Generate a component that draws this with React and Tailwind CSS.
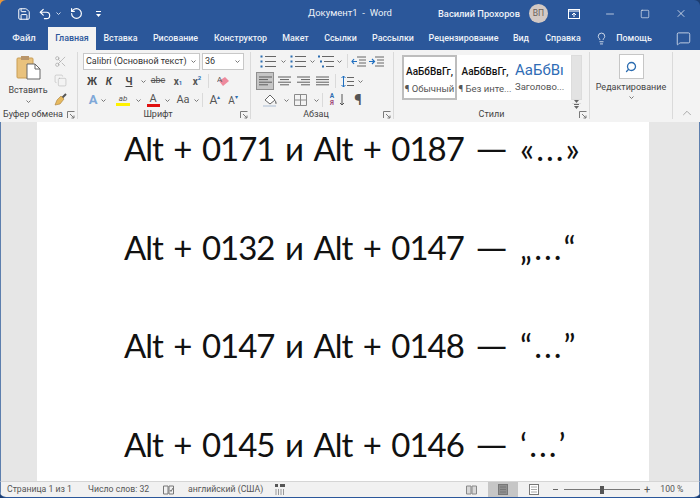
import React from "react";
import { Save, Undo2, RotateCw, Minus, Square, X, Lightbulb, MessageSquare, ChevronUp, Search, Scissors, Copy } from "lucide-react";

const Caret = ({ className = "" }) => (
  <svg width="5" height="3" viewBox="0 0 5 3" className={className}><path d="M0.5 0.5 L2.5 2.5 L4.5 0.5" fill="none" stroke="#777" strokeWidth="1" /></svg>
);
const Launcher = () => (
  <svg width="8" height="8" viewBox="0 0 8 8"><path d="M0.5 7V0.5H7.5M3 3L7 7M7 4.5V7H4.5" fill="none" stroke="#7a7a7a" strokeWidth="1" /></svg>
);
const Cell = ({ className = "", children }) => <div className={`flex h-full shrink-0 items-center justify-center ${className}`}>{children}</div>;
const VSep = ({ className = "" }) => <div className={`w-px shrink-0 bg-[#dadada] ${className}`} />;

const Lines = ({ kind = "left" }) => {
  const rows = {
    left: [[1, 14], [1, 10], [1, 14], [1, 10]],
    center: [[1, 14], [3, 12], [1, 14], [3, 12]],
    right: [[1, 14], [5, 14], [1, 14], [5, 14]],
    just: [[1, 14], [1, 14], [1, 14], [1, 14]],
  }[kind];
  return (
    <svg width="15" height="12" viewBox="0 0 15 12">
      {rows.map((r, i) => <path key={i} d={`M${r[0]} ${2 + i * 2.6}H${r[1]}`} stroke="#5f5f5f" strokeWidth="1" />)}
    </svg>
  );
};
const ListIcon = ({ c1 = "#2b6cb0", multi }) => (
  <svg width="17" height="13" viewBox="0 0 17 13">
    {[1.5, 6.5, 11.5].map((y, i) => (
      <g key={y}>
        <rect x={multi ? i * 2 : 0.5} y={y - 1} width="2" height="2" fill={c1} />
        <path d={`M${multi ? 4 + i * 2 : 5} ${y}H16`} stroke="#666" strokeWidth="1" />
      </g>
    ))}
  </svg>
);
const IndentIcon = ({ dir }) => (
  <svg width="15" height="11" viewBox="0 0 15 11">
    <path d="M6 1H15M8 4H15M8 7H15M6 10H15" stroke="#666" strokeWidth="1" />
    <path d={dir === "l" ? "M1 5.5H6M3 3L1 5.5L3 8" : "M0 5.5H5M3 3L5.5 5.5L3 8"} stroke="#1f6fc0" strokeWidth="1.2" fill="none" />
  </svg>
);
const PaperIcon = ({ active }) => (
  <svg width="12" height="11" viewBox="0 0 12 11"><rect x="1.5" y="0.5" width="9" height="10" fill={active ? "#8f8f8f" : "#fff"} stroke="#777" /><path d="M3 3H9M3 5.5H9M3 8H9" stroke={active ? "#777" : "#aaa"} /></svg>
);

const tabs = [
  ["Вставка", "w-[49px]"],
  ["Рисование", "w-[61px]"],
  ["Конструктор", "w-[69px]"],
  ["Макет", "w-[41px]"],
  ["Ссылки", "w-[49px]"],
  ["Рассылки", "w-[56px]"],
  ["Рецензирование", "w-[85px]"],
  ["Вид", "w-[30px]"],
  ["Справка", "w-[54px]"],
];

const docLines = [
  ["Alt + 0171 и Alt + 0187", "«", "»"],
  ["Alt + 0132 и Alt + 0147", "„", "“"],
  ["Alt + 0147 и Alt + 0148", "“", "”"],
  ["Alt + 0145 и Alt + 0146", "‘", "’"],
];

const Group = ({ className, padClass = "", label, labelClass = "", launcher, children }) => (
  <div className={`flex h-full shrink-0 flex-col ${className}`}>
    <div className={`min-h-0 flex-1 ${padClass}`}>{children}</div>
    <div className="relative flex h-[15px] items-center justify-center text-[9px] leading-none text-[#444]">
      <span className={`whitespace-nowrap ${labelClass}`}>{label}</span>
      {launcher && <div className="absolute right-[2px] top-[4px]"><Launcher /></div>}
    </div>
  </div>
);

export default function App() {
  return (
    <div className="relative h-[498px] w-[700px] overflow-hidden bg-[#1d3e70] font-['Roboto',sans-serif]">
      <div className="absolute left-0 top-0 h-[6px] w-[6px] bg-[#e8973a]" />
      <div className="relative flex h-full flex-col overflow-hidden rounded-[6px] border-b border-[#2b579a]">
        {/* title */}
        <div className="flex h-[27px] shrink-0 items-center bg-[#2b579a] text-white">
          <Cell className="ml-[15px] w-[18px]"><Save size={14} strokeWidth={1.7} /></Cell>
          <Cell className="ml-[4px] w-[16px]"><Undo2 size={14} strokeWidth={2} /></Cell>
          <Cell className="ml-[2px] w-[6px]"><svg width="5" height="3" viewBox="0 0 5 3"><path d="M0.5 0.5 L2.5 2.5 L4.5 0.5" fill="none" stroke="#cdd9ec" /></svg></Cell>
          <Cell className="ml-[8px] w-[14px]"><RotateCw size={13} strokeWidth={2.2} className="-scale-x-100" /></Cell>
          <Cell className="ml-[12px] w-[6px] flex-col gap-[2px]"><div className="h-px w-[5px] bg-white" /><svg width="5" height="3" viewBox="0 0 5 3"><path d="M0 0H5L2.5 3Z" fill="#fff" /></svg></Cell>
          <div className="ml-[207px] w-[85px] whitespace-pre text-[9.5px] text-[#eef2f8]">Документ1  -  Word</div>
          <div className="ml-[45px] w-[86px] whitespace-nowrap text-[9.3px] font-medium text-[#eef2f8]">Василий Прохоров</div>
          <div className="ml-[5px] flex h-[19px] w-[19px] shrink-0 items-center justify-center rounded-full bg-[#d3c9c4] text-[8.5px] text-[#6a5f5a]">ВП</div>
          <Cell className="ml-[20px] w-[12px]"><svg width="12" height="10" viewBox="0 0 12 10"><rect x="0.5" y="0.5" width="11" height="9" fill="none" stroke="#fff" /><path d="M0.5 2H11.5" stroke="#fff" /><path d="M6 8V4M4 6L6 4L8 6" stroke="#fff" fill="none" /></svg></Cell>
          <Cell className="ml-[24px] w-[12px]"><Minus size={12} strokeWidth={1.3} /></Cell>
          <Cell className="ml-[23px] w-[12px]"><Square size={10} strokeWidth={1.4} /></Cell>
          <Cell className="ml-[24px] w-[12px]"><X size={13} strokeWidth={1.4} /></Cell>
        </div>
        {/* tabs */}
        <div className="flex h-[23px] shrink-0 items-stretch bg-[#2b579a] text-[8.9px] font-medium text-[#eef2f8]">
          <Cell className="w-[48px] text-[9.5px]">Файл</Cell>
          <Cell className="w-[48px] bg-[#f3f3f3] text-[#2b579a]">Главная</Cell>
          {tabs.map(([t, w]) => <Cell key={t} className={w}>{t}</Cell>)}
          <Cell className="ml-[4px] w-[14px]"><Lightbulb size={13} strokeWidth={1.5} /></Cell>
          <Cell className="ml-[7px] w-[38px]">Помощь</Cell>
          <Cell className="ml-[22px] w-[16px]"><MessageSquare size={15} strokeWidth={1.2} /></Cell>
        </div>
        {/* ribbon */}
        <div className="flex h-[72px] shrink-0 bg-[#f3f3f3] pt-[2px] text-[#444]">
          <Group className="w-[77px]" padClass="pl-[3px] pr-[2px]" label="Буфер обмена" labelClass="-ml-[11px]" launcher>
            <div className="flex h-full">
              <div className="flex w-[50px] flex-col items-center pt-[3px]">
                <svg width="25" height="25" viewBox="0 0 25 25">
                  <rect x="1" y="3" width="16" height="20" rx="1" fill="#e9c27d" stroke="#c99d55" />
                  <rect x="5" y="1" width="8" height="4" fill="#b9956a" />
                  <path d="M11 9H19L24 14V24H11Z" fill="#fff" stroke="#666" />
                  <path d="M19 9V14H24" fill="none" stroke="#666" />
                </svg>
                <div className="mt-[3px] text-[9px] leading-[14px]">Вставить</div>
                <Caret className="mt-[3px]" />
              </div>
              <div className="flex w-[14px] flex-col items-center gap-[6px] pt-[3px]">
                <Scissors size={13} strokeWidth={1.2} className="text-[#a0a0a0]" />
                <Copy size={13} strokeWidth={1} className="text-[#b0b0b0]" />
                <svg width="13" height="13" viewBox="0 0 13 13"><path d="M8 5L12 1" stroke="#555" strokeWidth="2" /><path d="M7 3L10 6L6 11L1 12L3 7Z" fill="#e6b95f" stroke="#a9803a" strokeWidth="0.6" /></svg>
              </div>
            </div>
          </Group>
          <VSep className="mb-[3px]" />
          <Group className="w-[172px]" padClass="px-[5px]" label="Шрифт" labelClass="-ml-[12px]" launcher>
            <div className="flex h-[18px] gap-[2px] pt-px">
              <div className="flex w-[117px] items-center justify-between border border-[#c8c8c8] bg-white pl-[2px] pr-[3px] text-[9px] leading-none text-[#333]">
                <span className="whitespace-nowrap">Calibri (Основной текст)</span><Caret />
              </div>
              <div className="flex w-[42px] items-center justify-between border border-[#c8c8c8] bg-white pl-[2px] pr-[3px] text-[9px] leading-none text-[#333]">
                <span>36</span><Caret />
              </div>
            </div>
            <div className="mt-[2px] flex h-[18px] items-center text-[10px] text-[#555]">
              <Cell className="w-[18px] font-bold text-[#444]">Ж</Cell>
              <Cell className="w-[16px] font-bold italic text-[#444]">К</Cell>
              <Cell className="w-[24px] font-bold underline text-[#444]">Ч</Cell>
              <Cell className="w-[5px]"><Caret /></Cell>
              <Cell className="w-[24px] text-[9px] line-through">abc</Cell>
              <Cell className="w-[16px] font-bold">x<sub className="text-[6px] text-[#2b6cb0]">1</sub></Cell>
              <Cell className="w-[22px] font-bold">x<sup className="text-[6px] text-[#2b6cb0]">2</sup></Cell>
              <VSep className="h-[14px]" />
              <Cell className="ml-[6px] w-[16px]"><svg width="13" height="13" viewBox="0 0 13 13"><path d="M2 6L6 11L12 6L8 2Z" fill="#ee8a9d" /><text x="0" y="7" fontSize="8" fill="#555">A</text></svg></Cell>
            </div>
            <div className="mt-px flex h-[18px] items-center text-[#555]">
              <Cell className="ml-[2px] w-[16px] text-[13px] font-bold text-[#7ea8d8]">A</Cell>
              <Cell className="w-[5px]"><Caret /></Cell>
              <Cell className="ml-[7px] w-[20px] flex-col text-[8px] leading-[9px]"><span className="italic">ab</span><div className="h-[3px] w-[14px] bg-[#fff200]" /></Cell>
              <Cell className="ml-[1px] w-[8px]"><Caret /></Cell>
              <Cell className="ml-[3px] w-[16px] flex-col text-[11px] leading-[11px]"><span>A</span><div className="h-[3px] w-[13px] bg-[#e01010]" /></Cell>
              <Cell className="ml-[1px] w-[10px]"><Caret /></Cell>
              <Cell className="ml-[2px] w-[18px] text-[11px]">Aa</Cell>
              <Cell className="w-[8px]"><Caret /></Cell>
              <VSep className="ml-[2px] h-[14px]" />
              <Cell className="ml-[4px] w-[16px] text-[12px]">A<span className="mb-2 text-[6px] text-[#2b6cb0]">▴</span></Cell>
              <Cell className="ml-[2px] w-[16px] text-[10px]">A<span className="mb-2 text-[6px] text-[#2b6cb0]">▾</span></Cell>
            </div>
          </Group>
          <VSep className="mb-[3px]" />
          <Group className="w-[142px]" padClass="pl-[5px] pr-[2px]" label="Абзац" labelClass="-ml-[12px]" launcher>
            <div className="flex h-[18px] items-center">
              <Cell className="ml-[4px] w-[17px]"><ListIcon /></Cell>
              <Cell className="ml-[2px] w-[8px]"><Caret /></Cell>
              <Cell className="ml-[3px] w-[17px]"><ListIcon /></Cell>
              <Cell className="ml-[1px] w-[8px]"><Caret /></Cell>
              <Cell className="ml-[2px] w-[17px]"><ListIcon multi /></Cell>
              <Cell className="w-[8px]"><Caret /></Cell>
              <VSep className="ml-[4px] h-[14px]" />
              <Cell className="ml-[2px] w-[16px]"><IndentIcon dir="l" /></Cell>
              <Cell className="ml-[2px] w-[16px]"><IndentIcon dir="r" /></Cell>
            </div>
            <div className="mt-[2px] flex h-[18px] items-center">
              <Cell className="w-[18px] border border-[#8f8f8f] bg-[#c6c6c6]"><Lines kind="left" /></Cell>
              <Cell className="ml-px w-[18px]"><Lines kind="center" /></Cell>
              <Cell className="ml-px w-[18px]"><Lines kind="right" /></Cell>
              <Cell className="ml-px w-[18px]"><Lines kind="just" /></Cell>
              <VSep className="ml-[4px] h-[14px]" />
              <Cell className="ml-[3px] w-[17px]"><svg width="13" height="13" viewBox="0 0 13 13"><path d="M2.5 1V12M0.5 3L2.5 1L4.5 3M0.5 10L2.5 12L4.5 10" stroke="#1f6fc0" fill="none" /><path d="M6 2.5H13M6 6.5H13M6 10.5H13" stroke="#666" /></svg></Cell>
              <Cell className="w-[8px]"><Caret /></Cell>
            </div>
            <div className="mt-px flex h-[18px] items-center text-[#555]">
              <Cell className="ml-[6px] w-[17px]"><svg width="17" height="14" viewBox="0 0 17 14"><path d="M3 7L8 2L13 7L8 11Z" fill="#fff" stroke="#666" /><path d="M13 7C15 9 15 11 14 11C13 11 13 9 13 7Z" fill="#7a7a7a" /><rect x="1" y="12" width="13" height="2" fill="#cfd8e3" /></svg></Cell>
              <Cell className="ml-[3px] w-[8px]"><Caret /></Cell>
              <Cell className="ml-[3px] w-[14px]"><svg width="13" height="12" viewBox="0 0 13 12"><path d="M0.5 0.5H12.5V11.5H0.5ZM6.5 0.5V11.5M0.5 6H12.5" fill="none" stroke="#8a8a8a" /></svg></Cell>
              <Cell className="ml-[4px] w-[10px]"><Caret /></Cell>
              <VSep className="ml-[1px] h-[14px]" />
              <Cell className="ml-[2px] w-[14px] flex-col text-[6.5px] font-bold leading-[7px]"><span className="text-[#2b6cb0]">A</span><span className="text-[#a04a7a]">Я</span></Cell>
              <Cell className="w-[6px]"><svg width="6" height="12" viewBox="0 0 6 12"><path d="M3 0V11M1 9L3 11L5 9" stroke="#555" fill="none" /></svg></Cell>
              <Cell className="ml-[6px] w-[14px] text-[15px] font-bold">¶</Cell>
            </div>
          </Group>
          <VSep className="mb-[3px]" />
          <Group className="w-[195px]" padClass="pl-[8px] pr-[2px]" label="Стили" launcher>
            <div className="mt-[3px] flex h-[45px]">
              <div className="flex w-[55px] shrink-0 flex-col items-center border-2 border-[#bdbdbd] bg-white pt-[9px]">
                <div className="text-[10px] font-medium leading-[12px] text-[#111]">АаБбВвГг,</div>
                <div className="mt-[5px] whitespace-nowrap text-[9.5px] leading-[12px] text-[#555]">¶ Обычный</div>
              </div>
              <div className="flex w-[56px] shrink-0 flex-col items-center bg-white pt-[11px]">
                <div className="text-[10px] font-medium leading-[12px] text-[#111]">АаБбВвГг,</div>
                <div className="mt-[5px] whitespace-nowrap text-[9.5px] leading-[12px] text-[#555]">¶ Без инте...</div>
              </div>
              <div className="flex w-[58px] shrink-0 flex-col overflow-hidden bg-white pl-[2px] pt-[7px]">
                <div className="whitespace-nowrap text-[15px] leading-[16px] text-[#2f6cb5]">АаБбВı</div>
                <div className="mt-[3px] whitespace-nowrap text-[9.5px] leading-[12px] text-[#555]">Заголово...</div>
              </div>
              <div className="flex w-[11px] shrink-0 flex-col border border-[#dcdcdc] bg-white">
                <Cell className="h-[14px] bg-[#e3e3e3]" />
                <Cell className="flex-1 border-y border-[#dcdcdc]"><svg width="5" height="3" viewBox="0 0 5 3"><path d="M0 0H5L2.5 3Z" fill="#666" /></svg></Cell>
                <Cell className="flex-1 flex-col gap-px"><div className="h-px w-[5px] bg-[#666]" /><svg width="5" height="3" viewBox="0 0 5 3"><path d="M0 0H5L2.5 3Z" fill="#666" /></svg></Cell>
              </div>
            </div>
          </Group>
          <VSep className="mb-[3px]" />
          <Group className="w-[82px]" label="">
            <div className="flex h-full flex-col items-center">
              <div className="mt-[2px] flex h-[25px] w-[25px] items-center justify-center border border-[#c6c6c6] bg-white">
                <Search size={12} strokeWidth={2.6} className="-scale-x-100 text-[#2b6cb0]" />
              </div>
              <div className="mt-[1px] text-[9px] leading-[14px]">Редактирование</div>
              <Caret className="mt-[2px]" />
            </div>
          </Group>
          <VSep className="mb-[3px]" />
          <div className="flex flex-1 items-end justify-center pb-[2px]"><ChevronUp size={14} strokeWidth={1} className="text-[#777]" /></div>
        </div>
        {/* document */}
        <div className="flex min-h-0 flex-1 border-x border-[#5d7fae] bg-[#e6e6e6]">
          <div className="w-[36px] shrink-0" />
          <div className="h-full w-[612px] shrink-0 overflow-hidden bg-white pl-[87px] font-['Lato',sans-serif] text-[33px] leading-[98.5px] tracking-[-1px] text-[#111] [word-spacing:3px]">
            <div className="-mt-[23px]">
              {docLines.map(([a, open, close]) => (
                <div key={a} className="whitespace-nowrap">
                  {a}
                  <span className="ml-[11px] mr-[20px] inline-block origin-left scale-x-[1.27]">—</span>
                  {open}<span className="ml-[3px] tracking-[2px]">...</span>{close}
                </div>
              ))}
            </div>
          </div>
        </div>
        {/* status */}
        <div className="flex h-[16px] shrink-0 items-center border-x border-t border-x-[#5d7fae] border-t-[#d5d5d5] bg-[#f1f1f1] text-[8.7px] text-[#555]">
          <div className="ml-[6px] w-[81px] whitespace-nowrap">Страница 1 из 1</div>
          <div className="w-[74px] whitespace-nowrap">Число слов: 32</div>
          <Cell className="w-[12px]"><svg width="11" height="10" viewBox="0 0 11 10"><path d="M0.5 1H5V9H0.5ZM6 1H10.5V9H6ZM7 5L8 6.5L10 3" fill="none" stroke="#777" /></svg></Cell>
          <div className="ml-[14px] w-[84px] whitespace-nowrap">английский (США)</div>
          <Cell className="ml-[3px] w-[11px]"><svg width="11" height="11" viewBox="0 0 11 11"><rect x="0" y="0" width="3" height="3" fill="#555" /><rect x="5" y="0" width="5" height="3" fill="#555" /><path d="M1 5V11M3.5 5V11M6 5V11M8.5 5V11" stroke="#999" /></svg></Cell>
          <Cell className="ml-[179px] w-[12px]"><svg width="11" height="10" viewBox="0 0 11 10"><path d="M0.5 1H5V9H0.5ZM6 1H10.5V9H6Z" fill="#d8d8d8" stroke="#888" /></svg></Cell>
          <Cell className="ml-[11px] w-[30px] bg-[#c6c6c6]"><PaperIcon active /></Cell>
          <Cell className="ml-[10px] w-[12px]"><PaperIcon /></Cell>
          <div className="ml-[13px] h-px w-[5px] bg-[#666]" />
          <div className="ml-[6px] flex h-[8px] w-[76px] items-center">
            <div className="h-px w-[36px] bg-[#777]" />
            <div className="h-[8px] w-[4px] bg-[#555]" />
            <div className="h-px w-[36px] bg-[#777]" />
          </div>
          <div className="ml-[4px] text-[11px] leading-none">+</div>
          <div className="ml-[10px] whitespace-nowrap">100 %</div>
        </div>
      </div>
    </div>
  );
}
